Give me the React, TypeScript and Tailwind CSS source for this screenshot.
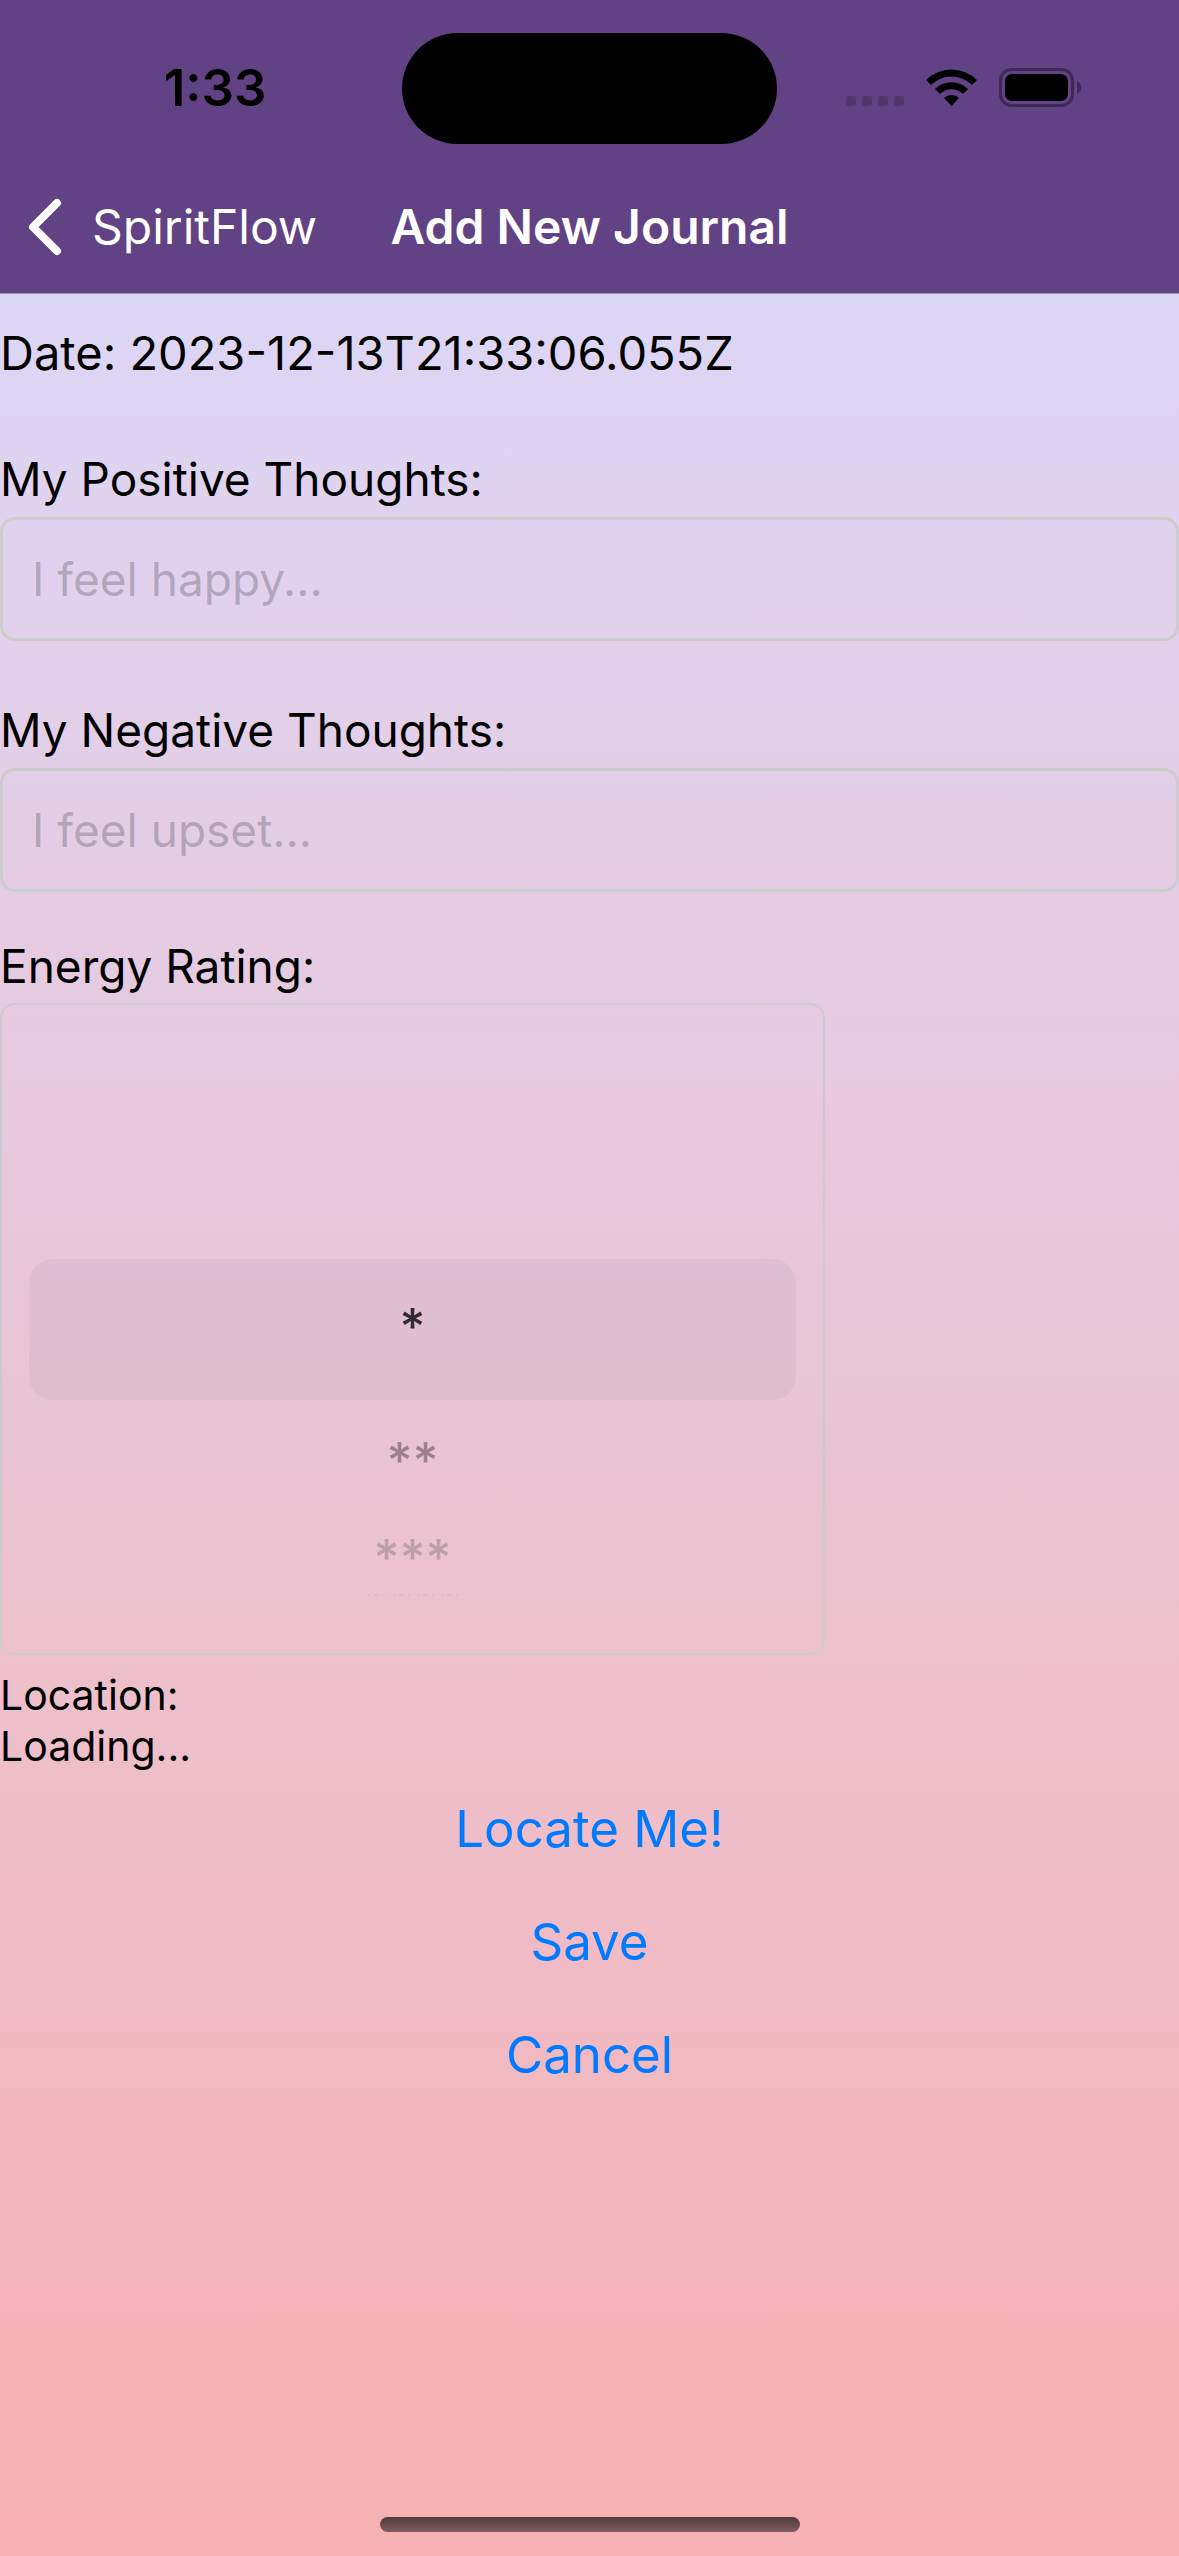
import { useState } from "react";

function StatusBar() {
  return (
    <div className="grid grid-cols-[1fr_375px_1fr] items-center pt-[33px] pb-[18px] text-black">
      <div className="pb-[2px] pl-[28px] text-center text-[51px] leading-[60px] font-semibold">1:33</div>
      <div className="h-[111px] rounded-full bg-black" />
      <div className="flex items-center justify-end gap-[22px] pr-[98px] pb-[2px]">
        <svg width="58" height="39" viewBox="0 0 58 39" fill="#4e356a" aria-hidden="true">
          <rect x="0" y="28" width="10" height="10" rx="3" />
          <rect x="16" y="28" width="10" height="10" rx="3" />
          <rect x="32" y="28" width="10" height="10" rx="3" />
          <rect x="48" y="28" width="10" height="10" rx="3" />
        </svg>
        <svg width="51" height="39" viewBox="0 0 51 39" role="img" aria-label="Wi-Fi">
          <path d="M0 12 A36 36 0 0 1 51 12 L46 17 A29 29 0 0 0 5 17 Z" fill="#000" />
          <path d="M9 21 A23.500 23.500 0 0 1 42 21 L37 26 A16.500 16.500 0 0 0 14 26 Z" fill="#000" />
          <path d="M18 30 A11 11 0 0 1 33 30 L25.500 38 Z" fill="#000" />
        </svg>
        <svg width="82" height="39" viewBox="0 0 82 39" role="img" aria-label="Battery full">
          <rect x="1.500" y="1.500" width="72" height="36" rx="11" fill="none" stroke="#3d2954" strokeWidth="3" />
          <rect x="6" y="6" width="63" height="27" rx="7" fill="#000" />
          <path d="M78 13 Q82 15 82 19.500 Q82 24 78 26 Z" fill="#3d2954" />
        </svg>
      </div>
    </div>
  );
}

function NavBar() {
  return (
    <nav className="grid h-[131px] grid-cols-[1fr_auto_1fr] items-center pb-[2px] text-[48px] leading-[60px] text-white">
      <button type="button" className="flex items-center gap-[30px] pl-[28px]">
        <svg width="34" height="58" viewBox="0 0 34 58" fill="none" stroke="#fff" strokeWidth="8" strokeLinecap="round" strokeLinejoin="round" aria-hidden="true">
          <path d="M29 5 L5 29 L29 53" />
        </svg>
        <span>SpiritFlow</span>
      </button>
      <h1 className="font-semibold">Add New Journal</h1>
    </nav>
  );
}

function ThoughtField({ id, label, placeholder }: { id: string; label: string; placeholder: string }) {
  return (
    <div className="flex flex-col gap-[9px]">
      <label htmlFor={id}>{label}</label>
      <input
        id={id}
        type="text"
        placeholder={placeholder}
        className="h-[124px] w-full rounded-[15px] border-[3px] border-[#cccccc] bg-transparent px-[29px] text-[46px] outline-none placeholder:text-[#3c3c43]/30"
      />
    </div>
  );
}

const ratings = [
  { value: 1, stars: "*", row: "mx-[27px] h-[141px] rounded-[24px] bg-[#747480]/8 pb-[6px] text-[#322a30]" },
  { value: 2, stars: "**", row: "h-[120px] text-[#9c8290]" },
  { value: 3, stars: "***", row: "h-[74px] text-[#bd9fac]" },
];

function RatingWheel() {
  const [rating, setRating] = useState(1);
  return (
    <fieldset>
      <legend className="pb-[8px]">Energy Rating:</legend>
      <div className="flex h-[652px] w-[825px] max-w-full flex-col rounded-[15px] border-2 border-[#cccccc] pt-[254px]">
        {ratings.map((r) => (
          <label key={r.value} className={`flex items-center justify-center text-[50px] font-medium ${r.row}`}>
            <input
              type="radio"
              name="rating"
              className="sr-only"
              checked={rating === r.value}
              onChange={() => setRating(r.value)}
            />
            {r.stars}
          </label>
        ))}
        <svg className="mx-auto" width="90" height="2" viewBox="0 0 90 2" fill="none" stroke="#d4b2be" strokeWidth="1" aria-hidden="true">
          <path d="M0 1h2m4 0h5m4 0h2M25 1h2m4 0h5m4 0h2M49 1h2m4 0h5m4 0h2M73 1h2m4 0h5m4 0h2" />
        </svg>
      </div>
    </fieldset>
  );
}

export default function App() {
  return (
    <div className="flex min-h-screen flex-col font-[Inter,sans-serif] text-[46px] leading-[57px] text-black">
      <header className="border-b border-[#a294bb] bg-[#614284]">
        <StatusBar />
        <NavBar />
      </header>
      <div className="flex flex-1 flex-col bg-linear-to-b from-[#dcd6f5] to-[#f6b1b2]">
        <main className="flex flex-1 flex-col pt-[30px]">
          <p className="pb-[70px] text-[47px]">Date: 2023-12-13T21:33:06.055Z</p>
          <form className="flex flex-col" onSubmit={(e) => e.preventDefault()}>
            <div className="flex flex-col gap-[61px] pb-[46px]">
              <ThoughtField id="positive" label="My Positive Thoughts:" placeholder="I feel happy..." />
              <ThoughtField id="negative" label="My Negative Thoughts:" placeholder="I feel upset..." />
            </div>
            <RatingWheel />
            <div className="pt-[15px] text-[41px] leading-[51px]">
              <p>Location:</p>
              <p>Loading...</p>
            </div>
            <div className="flex flex-col text-[51px] text-[#007aff]">
              <button type="button" className="h-[113px]">Locate Me!</button>
              <button type="submit" className="h-[113px]">Save</button>
              <button type="button" className="h-[113px]">Cancel</button>
            </div>
          </form>
        </main>
        <div className="mx-auto mb-[24px] h-[15px] w-[420px] rounded-full bg-linear-to-b from-[#4f3b3e] to-[#805d5e]" />
      </div>
    </div>
  );
}
